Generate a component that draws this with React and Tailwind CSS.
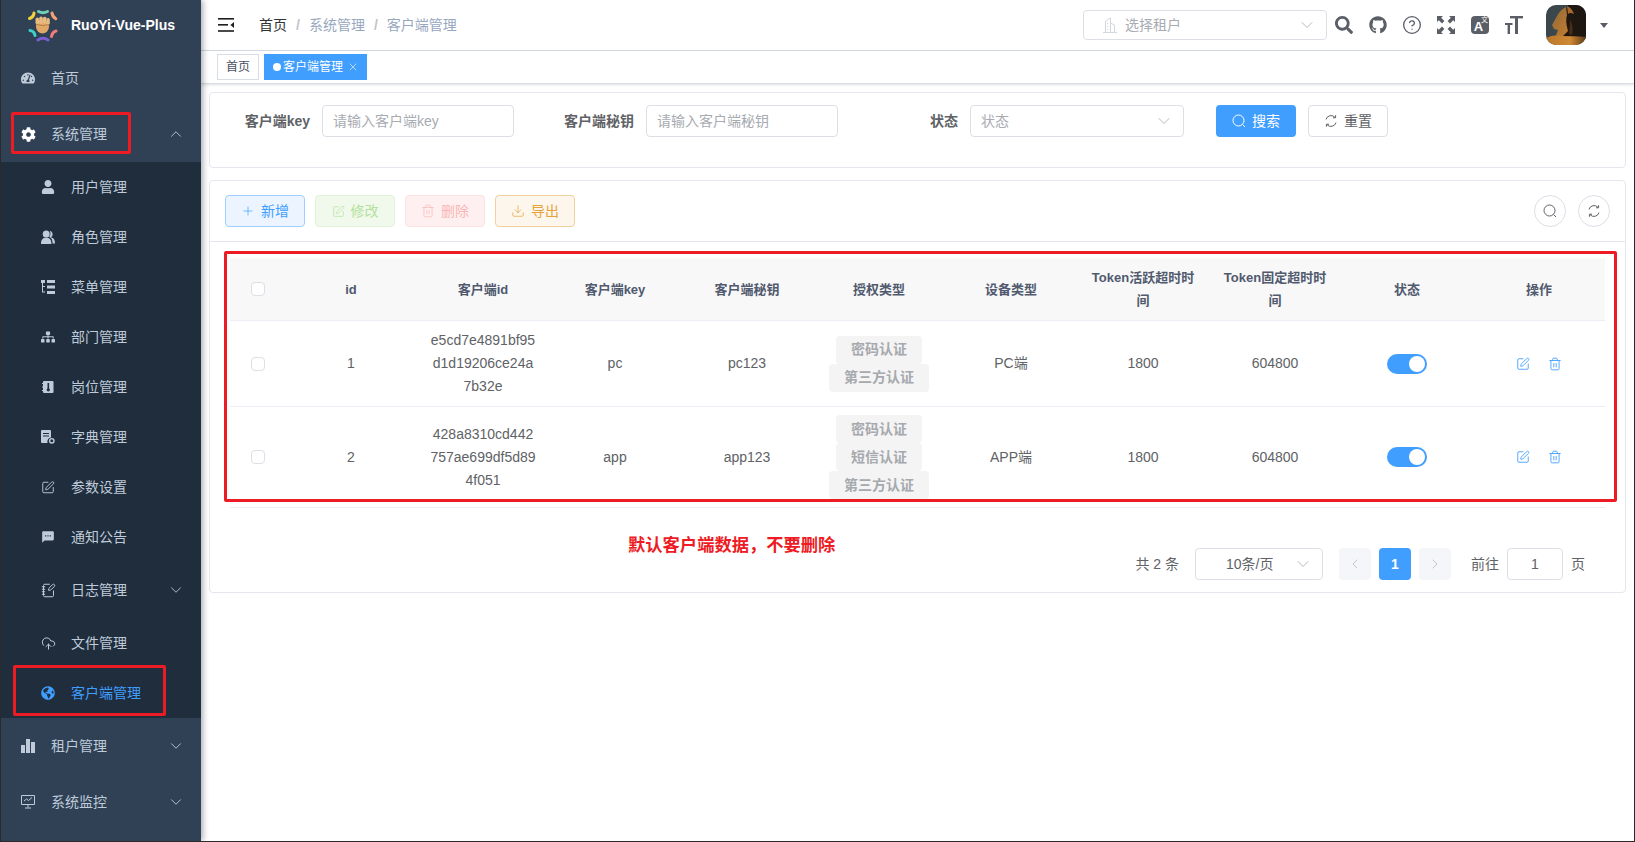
import React from "react";
import {
  ChevronDown,
  ChevronUp,
  ChevronLeft,
  ChevronRight,
  CircleHelp,
  CloudUpload,
  NotebookPen,
  Plus,
  SquarePen,
  Trash2,
  Download,
  X,
} from "lucide-react";
import {
  FaCog,
  FaGithub,
  FaGlobeAmericas,
  FaSearch,
  FaSitemap,
  FaTachometerAlt,
  FaUser,
} from "react-icons/fa";
import { MdSms } from "react-icons/md";

const SearchLine = ({ size = 14 }) => (
  <svg width={size} height={size} viewBox="0 0 14 14" fill="none" stroke="currentColor" strokeWidth="1">
    <circle cx="6.5" cy="6.500" r="5.500" />
    <path d="M10.600 10.600 13 13" />
  </svg>
);

const RefreshLine = ({ size = 14 }) => (
  <svg width={size} height={size} viewBox="0 0 14 14" fill="none" stroke="currentColor" strokeWidth="1">
    <path d="M2 5.500A5.200 5.200 0 0 1 11 3.400" />
    <path d="M12 8.500A5.200 5.200 0 0 1 3 10.600" />
    <path d="M11.600 1.200v2.600H9" />
    <path d="M2.400 12.800v-2.600H5" />
  </svg>
);

const PeopleIcon = () => (
  <svg width="14" height="14" viewBox="0 0 14 14" fill="currentColor">
    <circle cx="5.200" cy="4" r="3.500" />
    <path d="M0 14c0-4.600 1.800-6.200 5.200-6.200s5.200 1.600 5.200 6.200z" />
    <path d="M8.800.8a3.400 3.400 0 0 1 1 6.400c2.800.5 4.200 2.400 4.200 6.300h-2.400c0-3.500-1-5.400-3.300-6.500 1.400-1.800 1.500-4.300.5-6.200z" />
  </svg>
);

const TreeTableIcon = () => (
  <svg width="14" height="14" viewBox="0 0 14 14" fill="currentColor">
    <rect x="0" y="0" width="4" height="3" />
    <rect x="6" y="0" width="8" height="3" />
    <rect x="6" y="5.500" width="8" height="3" />
    <rect x="6" y="11" width="8" height="3" />
    <path d="M1 3h1v3h2v1H2v4.500h2v1H1z" />
  </svg>
);

const PostIcon = () => (
  <svg width="14" height="14" viewBox="0 0 14 14" fill="currentColor">
    <rect x="2" y="1" width="10.500" height="12" rx="1" />
    <rect x="1" y="3" width="2" height="1" />
    <rect x="1" y="6.500" width="2" height="1" />
    <rect x="1" y="10" width="2" height="1" />
    <rect x="6.500" y="3" width="1.600" height="6" fill="#1f2d3d" />
    <circle cx="7.300" cy="9.800" r="1.600" fill="#1f2d3d" />
  </svg>
);

const DictIcon = () => (
  <svg width="14" height="14" viewBox="0 0 14 14" fill="currentColor">
    <path d="M0 1a1 1 0 0 1 1-1h8a1 1 0 0 1 1 1v6.500A4 4 0 0 0 6.600 13H1a1 1 0 0 1-1-1z" />
    <rect x="2" y="3" width="6" height="1" fill="#1f2d3d" />
    <rect x="2" y="5.500" width="6" height="1" fill="#1f2d3d" />
    <circle cx="10.800" cy="10.800" r="2.200" fill="none" stroke="currentColor" strokeWidth="1.400" />
  </svg>
);

const ChartIcon = () => (
  <svg width="14" height="14" viewBox="0 0 14 14" fill="currentColor">
    <rect x="0" y="6" width="4" height="8" />
    <rect x="5" y="0" width="4" height="14" />
    <rect x="10" y="3" width="4" height="11" />
  </svg>
);

const MonitorIcon = () => (
  <svg width="14" height="14" viewBox="0 0 14 14" fill="none" stroke="currentColor" strokeWidth="1">
    <path d="M.5.500h13v9H.5z" />
    <path d="M3 6l2.500-2 2 1.500L11 2.500" />
    <path d="M7 9.500v3M4 13h6" />
  </svg>
);

const HamburgerIcon = () => (
  <svg width="16" height="14" viewBox="0 0 16 14" fill="#1f1f1f">
    <rect x="0" y="0" width="16" height="1.600" />
    <rect x="0" y="6" width="10" height="1.600" />
    <rect x="0" y="12.200" width="16" height="1.600" />
    <path d="M16 4v6l-3.600-3z" />
  </svg>
);

const FullscreenIcon = () => (
  <svg width="18" height="18" viewBox="0 0 18 18" fill="#5a5e66">
    <path d="M0 0h6L4.200 1.800 7.400 5 5 7.400 1.800 4.200 0 6z" />
    <path d="M18 0v6l-1.800-1.800L13 7.400 10.600 5l3.200-3.200L12 0z" />
    <path d="M0 18v-6l1.800 1.800L5 10.600 7.400 13l-3.200 3.200L6 18z" />
    <path d="M18 18h-6l1.800-1.800-3.200-3.200 2.400-2.400 3.200 3.200L18 12z" />
  </svg>
);

const TextSizeIcon = () => (
  <svg width="18" height="18" viewBox="0 0 18 18" fill="#5a5e66">
    <rect x="5" y="0" width="13" height="2.400" />
    <rect x="10" y="0" width="3" height="18" />
    <rect x="0" y="7" width="7.500" height="2" />
    <rect x="2.600" y="7" width="2.400" height="11" />
  </svg>
);

const BuildingIcon = () => (
  <svg width="14" height="16" viewBox="0 0 14 16" fill="none" stroke="#d4d7de" strokeWidth="1">
    <path d="M0 15.500h14" />
    <path d="M2.500 15.500V4L7.500.8v14.700" />
    <path d="M7.500 6l4 2v7.500" />
    <path d="M4.500 6v1M4.500 9v1M4.500 12v1" />
  </svg>
);

const Logo = () => (
  <svg width="34" height="34" viewBox="0 0 34 34" fill="none" strokeWidth="3" strokeLinecap="round">
    <path d="M12.500 3.500q4.500 2.400 9 0" stroke="#6fcfb5" />
    <path d="M26 5q.4 3.800 3.800 5.800" stroke="#f4a27a" />
    <path d="M30 23q-3.700 1-4.500 5.500" stroke="#ee7d7d" />
    <path d="M12 32q5-3.500 10 0" stroke="#7a5fd0" />
    <path d="M4 22.500q4.300.5 5 5" stroke="#3fd0c9" />
    <path d="M8 5q-.4 4-4.500 5.500" stroke="#f2d33c" />
    <ellipse cx="16.500" cy="18.500" rx="6.500" ry="7" fill="#dfa868" stroke="none" />
    <rect x="9.500" y="9.500" width="3.600" height="7" rx="1.800" fill="#e8bb80" stroke="none" />
    <rect x="13.200" y="8.500" width="3.600" height="7.500" rx="1.800" fill="#e8bb80" stroke="none" />
    <rect x="16.900" y="8.800" width="3.600" height="7" rx="1.800" fill="#e8bb80" stroke="none" />
    <rect x="20.400" y="10" width="3.400" height="7" rx="1.700" fill="#e8bb80" stroke="none" />
    <path d="M11 16.500q6 2.500 12 0" stroke="#a9743d" strokeWidth="0.8" />
  </svg>
);

const Avatar = () => (
  <svg width="40" height="40" viewBox="0 0 40 40" className="rounded-[10px]">
    <defs>
      <linearGradient id="ground" x1="0" y1="0" x2="1" y2="0">
        <stop offset="0" stopColor="#b9762c" />
        <stop offset="0.6" stopColor="#d08a33" />
        <stop offset="1" stopColor="#5c3a18" />
      </linearGradient>
      <linearGradient id="face" x1="0" y1="0" x2="1" y2="1">
        <stop offset="0" stopColor="#8f6a3c" />
        <stop offset="1" stopColor="#c27c2e" />
      </linearGradient>
    </defs>
    <rect width="40" height="40" fill="#3b474b" />
    <path d="M22 0h18v34H18q-4-6-2-16 1-10 6-18z" fill="#1d1611" />
    <path d="M20 2q-6 3-9 9l-5 9 2 4 4 1-2 5 6 2 6-6q-3-10-1-16z" fill="url(#face)" />
    <path d="M21 1q5 2 7 8-4-2-6 0z" fill="#a8692a" />
    <path d="M0 33q8-4 16-2 10 0 24 1v8H0z" fill="url(#ground)" />
    <path d="M24 14q4 8 2 16l-3-1q1-8 1-15z" fill="#4a2d14" />
  </svg>
);

const topItemClass = "flex h-[56px] items-center pl-5 pr-[16px] text-sm text-[#bfcbd9]";
const subItemClass = "flex items-center pl-10 pr-[16px] text-sm text-[#bfcbd9]";

const subMenus = [
  { label: "用户管理", icon: <FaUser size={14} /> },
  { label: "角色管理", icon: <PeopleIcon /> },
  { label: "菜单管理", icon: <TreeTableIcon /> },
  { label: "部门管理", icon: <FaSitemap size={14} /> },
  { label: "岗位管理", icon: <PostIcon /> },
  { label: "字典管理", icon: <DictIcon /> },
  { label: "参数设置", icon: <SquarePen size={15} strokeWidth={1.6} /> },
  { label: "通知公告", icon: <MdSms size={16} /> },
];

const Sidebar = () => (
  <aside className="z-10 flex h-full w-[200px] shrink-0 flex-col bg-[#304156] shadow-[2px_0_6px_rgba(0,21,41,0.35)]">
    <div className="flex h-[50px] items-center pl-[25px]">
      <Logo />
      <span className="ml-[11px] text-sm font-bold text-white">RuoYi-Vue-Plus</span>
    </div>
    <div className={topItemClass}>
      <FaTachometerAlt size={14} />
      <span className="ml-4">首页</span>
    </div>
    <div className={topItemClass}>
      <FaCog size={15} className="text-white" />
      <span className="ml-[15px] flex-1">系统管理</span>
      <ChevronUp size={18} strokeWidth={1.2} />
    </div>
    <div className="bg-[#1f2d3d]">
      {subMenus.map((m) => (
        <div key={m.label} className={`${subItemClass} h-[50px]`}>
          <span className="flex w-[14px] justify-center">{m.icon}</span>
          <span className="ml-4">{m.label}</span>
        </div>
      ))}
      <div className={`${subItemClass} h-[56px]`}>
        <NotebookPen size={15} strokeWidth={1.6} />
        <span className="ml-[15px] flex-1">日志管理</span>
        <ChevronDown size={18} strokeWidth={1.2} />
      </div>
      <div className={`${subItemClass} h-[50px]`}>
        <CloudUpload size={15} strokeWidth={1.6} />
        <span className="ml-[15px]">文件管理</span>
      </div>
      <div className={`${subItemClass} h-[50px] !text-[#409eff]`}>
        <FaGlobeAmericas size={14} />
        <span className="ml-4">客户端管理</span>
      </div>
    </div>
    <div className={topItemClass}>
      <ChartIcon />
      <span className="ml-4 flex-1">租户管理</span>
      <ChevronDown size={18} strokeWidth={1.2} />
    </div>
    <div className={topItemClass}>
      <MonitorIcon />
      <span className="ml-4 flex-1">系统监控</span>
      <ChevronDown size={18} strokeWidth={1.2} />
    </div>
  </aside>
);

const Navbar = () => (
  <header className="flex h-[51px] shrink-0 items-center border-b border-[#d8dce5] bg-white shadow-[0_1px_4px_rgba(0,21,41,0.08)]">
    <div className="ml-[17px] flex">
      <HamburgerIcon />
    </div>
    <nav className="ml-[25px] flex items-center text-sm text-[#97a8be]">
      <span className="text-[#303133]">首页</span>
      <span className="mx-[9px] font-bold text-[#c0c4cc]">/</span>
      <span>系统管理</span>
      <span className="mx-[9px] font-bold text-[#c0c4cc]">/</span>
      <span>客户端管理</span>
    </nav>
    <div className="ml-auto flex h-[30px] w-[244px] items-center rounded border border-[#dcdfe6] pl-[19px] pr-[9px] text-sm text-[#a8abb2]">
      <BuildingIcon />
      <span className="ml-2 flex-1">选择租户</span>
      <ChevronDown size={20} strokeWidth={1} />
    </div>
    <div className="ml-2 flex items-center gap-4 text-[#5a5e66]">
      <FaSearch size={18} />
      <FaGithub size={18} />
      <CircleHelp size={20} strokeWidth={1.6} className="-mx-px" />
      <FullscreenIcon />
      <div className="relative flex h-[18px] w-[18px] items-center justify-center rounded-sm bg-[#5a5e66] text-[13px] font-bold leading-none text-white">
        <span className="-ml-[3px] mt-[3px]">A</span>
        <span className="absolute right-[1px] top-0 text-[7px] font-normal">文</span>
      </div>
      <TextSizeIcon />
    </div>
    <div className="ml-[23px] flex items-center pr-[26px]">
      <Avatar />
      <svg width="8" height="5" viewBox="0 0 8 5" className="ml-[14px]" fill="#5a5e66">
        <path d="M0 0h8L4 5z" />
      </svg>
    </div>
  </header>
);

const TagsBar = () => (
  <div className="flex h-[33px] shrink-0 items-center border-b border-[#d8dce5] bg-white pl-4 text-xs shadow-[0_1px_3px_rgba(0,0,0,0.12)]">
    <span className="flex h-[26px] items-center border border-[#d8dce5] px-2 text-[#495060]">首页</span>
    <span className="ml-[5px] flex h-[26px] items-center border border-[#409eff] bg-[#409eff] pl-2 pr-[7px] text-white">
      <span className="mr-[2px] h-2 w-2 rounded-full bg-white" />
      客户端管理
      <X size={12} strokeWidth={1.2} className="ml-[4px]" />
    </span>
  </div>
);

const Field = ({ label, labelWidth, width, placeholder, select }) => (
  <div className="flex items-center text-sm">
    <label className={`${labelWidth} pr-3 text-right font-bold text-[#606266]`}>{label}</label>
    <div className={`${width} flex h-[32px] items-center rounded border border-[#dcdfe6] pl-[10px] pr-[9px] text-[#a8abb2]`}>
      <span className="flex-1">{placeholder}</span>
      {select && <ChevronDown size={20} strokeWidth={1} />}
    </div>
  </div>
);

const SearchCard = () => (
  <section className="mb-3 rounded border border-[#e4e7ed] bg-white p-3 pb-[30px]">
    <div className="flex items-center">
      <Field label="客户端key" labelWidth="w-[100px]" width="w-[192px]" placeholder="请输入客户端key" />
      <div className="ml-[18px]">
        <Field label="客户端秘钥" labelWidth="w-[114px]" width="w-[192px]" placeholder="请输入客户端秘钥" />
      </div>
      <div className="ml-[18px]">
        <Field label="状态" labelWidth="w-[114px]" width="w-[214px]" placeholder="状态" select />
      </div>
      <button className="ml-8 flex h-[32px] w-[80px] items-center justify-center gap-[6px] rounded bg-[#409eff] text-sm text-white">
        <SearchLine />
        搜索
      </button>
      <button className="ml-3 flex h-[32px] w-[80px] items-center justify-center gap-[6px] rounded border border-[#dcdfe6] text-sm text-[#606266]">
        <RefreshLine />
        重置
      </button>
    </div>
  </section>
);

const ToolButton = ({ className, icon, children }) => (
  <button className={`flex h-[32px] w-[80px] items-center justify-center gap-[6px] rounded border text-sm ${className}`}>
    {icon}
    {children}
  </button>
);

const Toolbar = () => (
  <div className="flex items-center border-b border-[#e4e7ed] px-[15px] py-[14px]">
    <div className="flex gap-[10px]">
      <ToolButton className="border-[#a0cfff] bg-[#ecf5ff] text-[#409eff]" icon={<Plus size={14} strokeWidth={1.2} />}>
        新增
      </ToolButton>
      <ToolButton className="border-[#e1f3d8] bg-[#f0f9eb] text-[#b3e19d]" icon={<SquarePen size={13} strokeWidth={1.2} />}>
        修改
      </ToolButton>
      <ToolButton className="border-[#fde2e2] bg-[#fef0f0] text-[#fab6b6]" icon={<Trash2 size={14} strokeWidth={1.2} />}>
        删除
      </ToolButton>
      <ToolButton className="border-[#f3d19e] bg-[#fdf6ec] text-[#e6a23c]" icon={<Download size={14} strokeWidth={1.2} />}>
        导出
      </ToolButton>
    </div>
    <div className="ml-auto flex gap-3 text-[#606266]">
      <span className="flex h-[32px] w-[32px] items-center justify-center rounded-full border border-[#dcdfe6]">
        <SearchLine />
      </span>
      <span className="flex h-[32px] w-[32px] items-center justify-center rounded-full border border-[#dcdfe6]">
        <RefreshLine />
      </span>
    </div>
  </div>
);

const rowGrid = "grid grid-cols-[55px_repeat(10,132px)] border-b border-[#ebeef5]";
const cellClass = "flex items-center justify-center px-3 text-center break-all";

const Checkbox = () => <span className="h-[14px] w-[14px] rounded-sm border border-[#dcdfe6] bg-white" />;

const headers = [
  "id",
  "客户端id",
  "客户端key",
  "客户端秘钥",
  "授权类型",
  "设备类型",
  "Token活跃超时时间",
  "Token固定超时时间",
  "状态",
  "操作",
];

const rows = [
  {
    id: 1,
    clientId: "e5cd7e4891bf95d1d19206ce24a7b32e",
    key: "pc",
    secret: "pc123",
    grants: ["密码认证", "第三方认证"],
    device: "PC端",
  },
  {
    id: 2,
    clientId: "428a8310cd442757ae699df5d894f051",
    key: "app",
    secret: "app123",
    grants: ["密码认证", "短信认证", "第三方认证"],
    device: "APP端",
  },
];

const Table = () => (
  <div className="w-[1375px] text-sm leading-[23px] text-[#606266]">
    <div className={`${rowGrid} bg-[#f8f8f9] text-[13px] font-bold text-[#515a6e]`}>
      <div className="flex items-center justify-center">
        <Checkbox />
      </div>
      {headers.map((h) => (
        <div key={h} className={`${cellClass} py-2`}>
          {h}
        </div>
      ))}
    </div>
    {rows.map((r) => (
      <div key={r.id} className={rowGrid}>
        <div className="flex items-center justify-center">
          <Checkbox />
        </div>
        <div className={cellClass}>{r.id}</div>
        <div className={`${cellClass} py-2`}>{r.clientId}</div>
        <div className={cellClass}>{r.key}</div>
        <div className={cellClass}>{r.secret}</div>
        <div className="flex flex-col items-center justify-center py-2">
          {r.grants.map((g) => (
            <span key={g} className="flex h-[28px] items-center rounded bg-[#f4f4f5] px-[15px] font-bold text-[#a6a9ad]">
              {g}
            </span>
          ))}
        </div>
        <div className={cellClass}>{r.device}</div>
        <div className={cellClass}>1800</div>
        <div className={cellClass}>604800</div>
        <div className={cellClass}>
          <span className="flex h-[20px] w-[40px] items-center justify-end rounded-full bg-[#409eff] px-[2px]">
            <span className="h-[16px] w-[16px] rounded-full bg-white" />
          </span>
        </div>
        <div className={`${cellClass} gap-[18px] text-[#409eff]`}>
          <SquarePen size={14} strokeWidth={1.5} />
          <Trash2 size={14} strokeWidth={1.5} />
        </div>
      </div>
    ))}
  </div>
);

const Pagination = () => (
  <div className="mt-10 flex items-center justify-end pr-[40px] text-sm text-[#606266]">
    <span>共 2 条</span>
    <div className="ml-4 flex h-[32px] w-[128px] items-center rounded border border-[#dcdfe6] pl-[30px] pr-[9px]">
      <span className="flex-1">10条/页</span>
      <ChevronDown size={20} strokeWidth={1} className="text-[#a8abb2]" />
    </div>
    <span className="ml-4 flex h-[32px] w-[32px] items-center justify-center rounded-sm bg-[#f4f6fa] text-[#a8abb2]">
      <ChevronLeft size={16} strokeWidth={1} />
    </span>
    <span className="ml-2 flex h-[32px] w-[32px] items-center justify-center rounded-sm bg-[#409eff] font-bold text-white">
      1
    </span>
    <span className="ml-2 flex h-[32px] w-[32px] items-center justify-center rounded-sm bg-[#f4f6fa] text-[#a8abb2]">
      <ChevronRight size={16} strokeWidth={1} />
    </span>
    <span className="ml-5">前往</span>
    <span className="ml-2 flex h-[32px] w-[56px] items-center justify-center rounded border border-[#dcdfe6]">1</span>
    <span className="ml-2">页</span>
  </div>
);

export default function App() {
  return (
    <div className="relative flex h-[842px] w-full overflow-hidden border-x border-b border-[#2b2b2b] bg-white font-['Liberation_Sans','Noto_Sans_CJK_SC',sans-serif]">
      <Sidebar />
      <main className="flex min-w-0 flex-1 flex-col">
        <Navbar />
        <TagsBar />
        <div className="pl-2 pr-[8px] pt-2">
          <SearchCard />
          <section className="rounded border border-[#e4e7ed] bg-white pb-3">
            <Toolbar />
            <div className="px-5 pt-4">
              <Table />
            </div>
            <Pagination />
          </section>
        </div>
      </main>

      {/* red annotations painted over the screenshot */}
      <div className="absolute left-[10px] top-[112px] z-20 h-[42px] w-[120px] rounded-[2px] border-[3px] border-[#ed1c24]" />
      <div className="absolute left-[12px] top-[665px] z-20 h-[51px] w-[153px] rounded-[2px] border-[3px] border-[#ed1c24]" />
      <div className="absolute left-[223px] top-[251px] z-20 h-[251px] w-[1393px] rounded-[2px] border-[3px] border-[#ed1c24]" />
      <span className="absolute left-[627px] top-[534px] z-20 text-[17.3px] font-bold leading-[23px] text-[#ed1c24]">
        默认客户端数据，不要删除
      </span>
    </div>
  );
}
